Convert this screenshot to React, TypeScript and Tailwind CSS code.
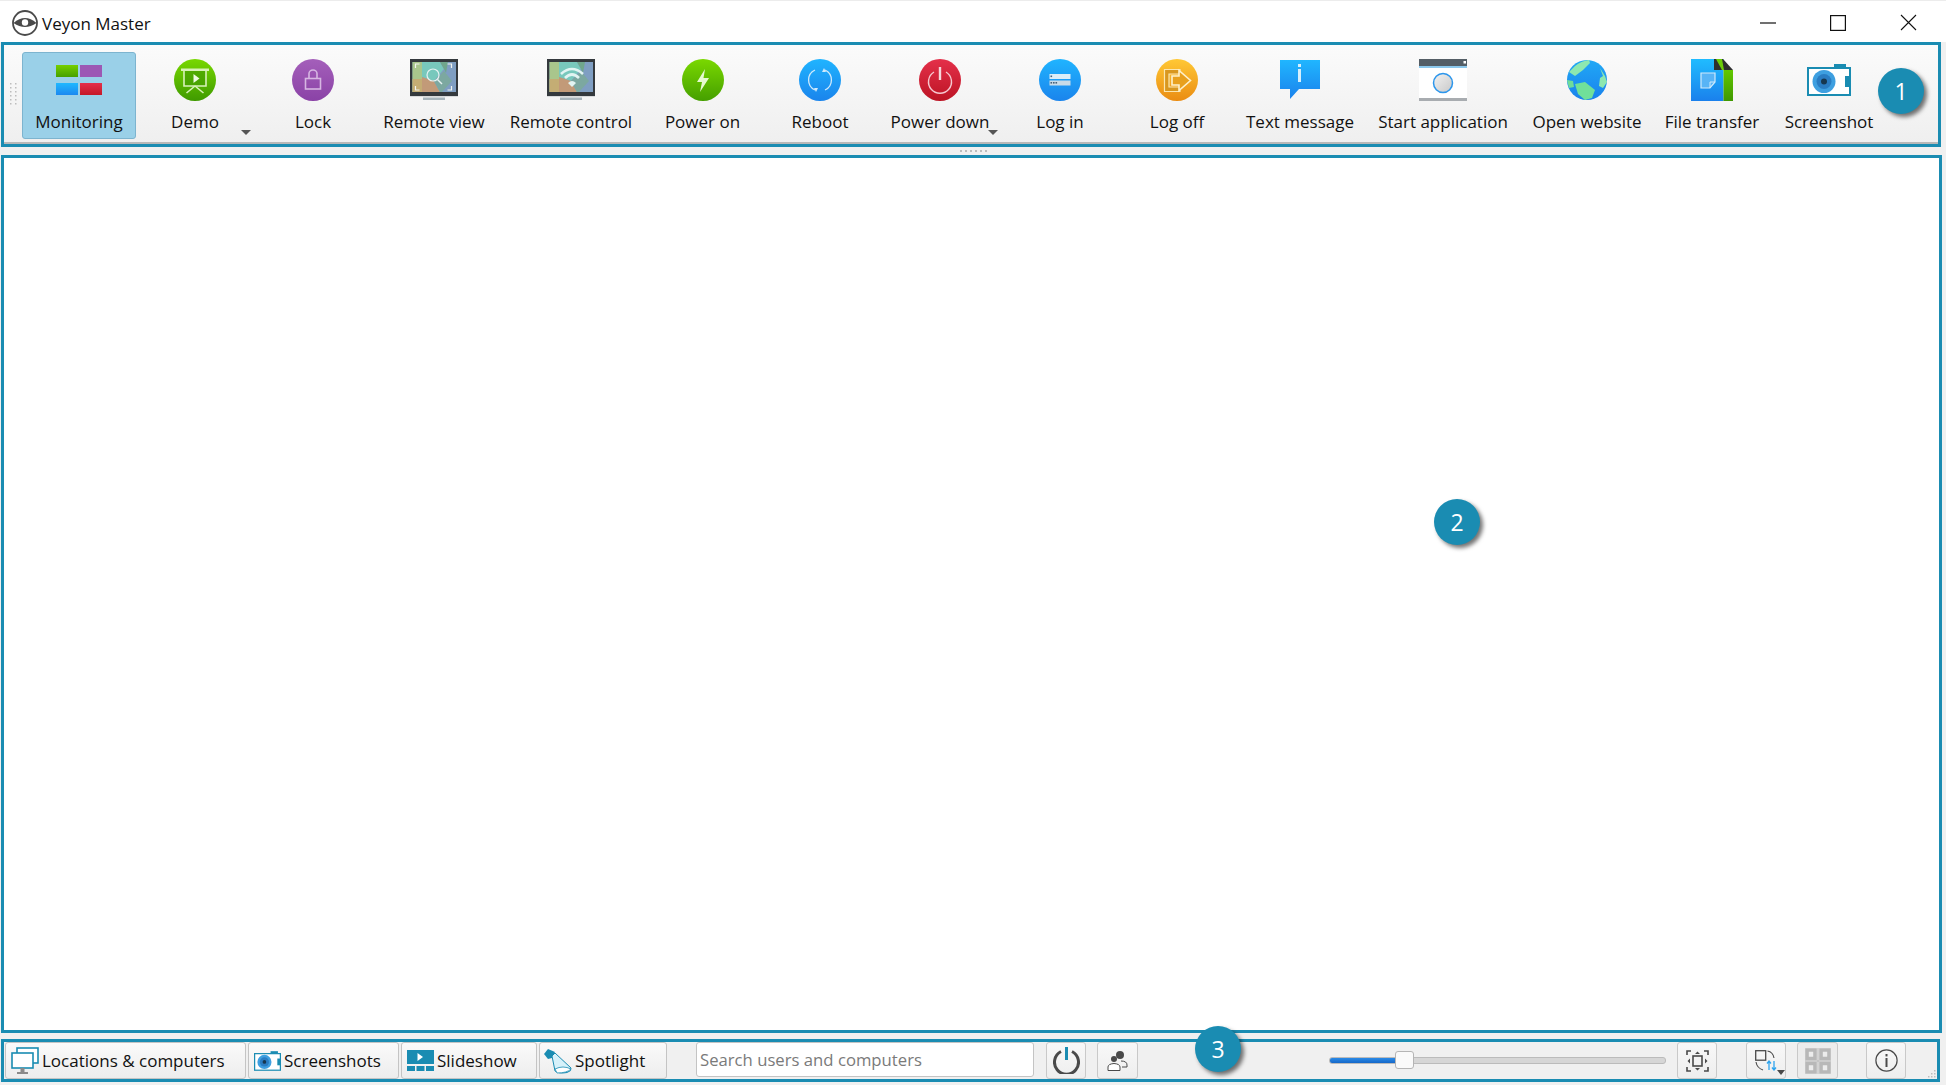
import type { ReactNode } from "react";

const TEAL = "#1a8cb2";

function Disc({ id, from, to, children }: { id: string; from: string; to: string; children?: ReactNode }) {
  return (
    <svg width="42" height="42" viewBox="0 0 42 42" fill="none">
      <defs>
        <linearGradient id={id} x1="0" y1="0" x2="0" y2="1">
          <stop offset="0" stopColor={from} />
          <stop offset="1" stopColor={to} />
        </linearGradient>
      </defs>
      <circle cx="21" cy="21" r="21" fill={`url(#${id})`} />
      {children}
    </svg>
  );
}

function MonitoringIcon() {
  return (
    <svg width="46" height="30" viewBox="0 0 46 30">
      <defs>
        <linearGradient id="mg" x1="0" y1="0" x2="0" y2="1">
          <stop offset="0" stopColor="#76cf00" />
          <stop offset="1" stopColor="#46a000" />
        </linearGradient>
        <linearGradient id="mb" x1="0" y1="0" x2="0" y2="1">
          <stop offset="0" stopColor="#1fb8ff" />
          <stop offset="1" stopColor="#1c88f0" />
        </linearGradient>
        <linearGradient id="mr" x1="0" y1="0" x2="0" y2="1">
          <stop offset="0" stopColor="#e4304a" />
          <stop offset="1" stopColor="#c41828" />
        </linearGradient>
      </defs>
      <rect x="0" y="0" width="22" height="12" fill="url(#mg)" />
      <rect x="24" y="0" width="22" height="12" fill="#9c58b4" />
      <rect x="0" y="18" width="22" height="12" fill="url(#mb)" />
      <rect x="24" y="18" width="22" height="12" fill="url(#mr)" />
    </svg>
  );
}

function Monitor({ children }: { children?: ReactNode }) {
  return (
    <svg width="48" height="42" viewBox="0 0 48 42" fill="none">
      <rect x="0" y="0" width="48" height="37" fill="#34393d" />
      <rect x="0" y="37" width="48" height="1" fill="#d8dadb" />
      <rect x="2.5" y="3" width="43.5" height="30" fill="#7fb0b8" />
      <polygon points="2.5,3 12,3 12,33 2.5,33" fill="#a9c68c" />
      <polygon points="2.5,20 12,20 12,33 2.5,33" fill="#c4ad74" />
      <polygon points="12,3 30,3 34,10 24,22 12,18" fill="#78c8bc" />
      <polygon points="12,18 24,22 30,33 12,33" fill="#c29a78" />
      <polygon points="30,3 46,3 46,33 30,33 24,22 34,10" fill="#7f9ec2" />
      <polygon points="30,3 38,3 36,14 34,10" fill="#70a68c" />
      <polygon points="24,22 34,12 42,22 32,33 30,33" fill="#7ca8a0" />
      <rect x="13" y="38.5" width="22" height="2.5" fill="#a8b5bc" />
      {children}
    </svg>
  );
}

function DemoIcon() {
  return (
    <Disc id="d1" from="#78d800" to="#3f9a00">
      <rect x="10" y="12" width="22" height="15" fill="#3f9a00" opacity="0.6" />
      <rect x="7" y="9.5" width="28" height="2.5" fill="#d8f2b8" />
      <path d="M10 12V27H32V12" stroke="#d8f2b8" strokeWidth="1.6" />
      <path d="M19.5 15L25.5 19.5L19.5 24Z" fill="#eefbe0" />
      <path d="M21 27L12.5 34M21 27L29.5 34" stroke="#d8f2b8" strokeWidth="1.6" />
    </Disc>
  );
}

function LockIcon() {
  return (
    <Disc id="d2" from="#a45fba" to="#8a42a6">
      <rect x="13.5" y="19.5" width="15" height="10.5" stroke="#d6b6e2" strokeWidth="1.6" />
      <path d="M17 19.5V14.5A4 3.5 0 0 1 25 14.5V19.5" stroke="#d6b6e2" strokeWidth="1.6" />
    </Disc>
  );
}

function RemoteViewIcon() {
  return (
    <Monitor>
      <path d="M8 9V5H12M40 5H44V9M8 27V31H12M40 31H44V27" stroke="#f2f4ee" strokeWidth="1.2" transform="translate(-2.5 0)" />
      <circle cx="23" cy="16" r="6" stroke="#e6f2f2" strokeWidth="1.2" />
      <path d="M27.5 20.5L32 25" stroke="#e6f2f2" strokeWidth="1.4" />
    </Monitor>
  );
}

function RemoteControlIcon() {
  return (
    <Monitor>
      <path d="M14 15Q25 5 36 15" stroke="#e2f4f2" strokeWidth="2.6" />
      <path d="M18 19Q25 12 32 19" stroke="#e2f4f2" strokeWidth="2.6" />
      <path d="M21 24Q25 20 29 24L25 28Z" fill="#e2f4f2" />
    </Monitor>
  );
}

function PowerOnIcon() {
  return (
    <Disc id="d3" from="#7ad800" to="#459f00">
      <path d="M23 10L15 23H20L18 33L27 19H21.5Z" fill="#e6f9d2" />
    </Disc>
  );
}

function RebootIcon() {
  return (
    <Disc id="d4" from="#20b4ff" to="#1a84ec">
      <path d="M26 11A11 11 0 0 1 26 31" stroke="#cfe9fb" strokeWidth="1.3" />
      <path d="M16 31A11 11 0 0 1 16 11" stroke="#cfe9fb" strokeWidth="1.3" />
      <path d="M25 9L27 13L23 13Z" fill="#cfe9fb" />
      <path d="M17 33L15 29L19 29Z" fill="#cfe9fb" />
    </Disc>
  );
}

function PowerDownIcon() {
  return (
    <Disc id="d5" from="#e4304a" to="#bc1424">
      <path d="M15 13A11.5 11.5 0 1 0 27 13" stroke="#f6c8d0" strokeWidth="1.4" />
      <rect x="19.8" y="8" width="2.4" height="13" fill="#f6d8dc" />
    </Disc>
  );
}

function LogInIcon() {
  return (
    <Disc id="d6" from="#20b4ff" to="#1a84ec">
      <rect x="10.5" y="15" width="21" height="5" fill="#dcedf8" />
      <rect x="10.5" y="21.5" width="21" height="5" fill="#c8dbe8" />
      <rect x="11.5" y="16.5" width="1.6" height="1.6" fill="#44607a" />
      <rect x="11.5" y="23" width="1.6" height="1.6" fill="#44607a" />
      <rect x="14" y="23" width="1.6" height="1.6" fill="#44607a" />
      <rect x="16.5" y="23" width="1.6" height="1.6" fill="#44607a" />
    </Disc>
  );
}

function LogOffIcon() {
  return (
    <Disc id="d7" from="#ffc835" to="#ea8c12">
      <path d="M8.5 10.5H24V15H13V28H24V32.5H8.5Z" fill="#d9971f" stroke="#fbe6b0" strokeWidth="1.2" />
      <path d="M16 17H23V11.5L34.5 21.5L23 31.5V26H16Z" fill="#e8a01e" stroke="#fdf0cc" strokeWidth="1.6" />
    </Disc>
  );
}

function TextMessageIcon() {
  return (
    <svg width="40" height="40" viewBox="0 0 40 40">
      <defs>
        <linearGradient id="tm" x1="0" y1="0" x2="0" y2="1">
          <stop offset="0" stopColor="#20b6ff" />
          <stop offset="1" stopColor="#1a82ec" />
        </linearGradient>
      </defs>
      <path d="M0 0H40V29H19L10 39V29H0Z" fill="url(#tm)" />
      <rect x="18" y="4" width="3" height="3" fill="#d6effc" />
      <rect x="18" y="9" width="3" height="13" fill="#d6effc" />
    </svg>
  );
}

function StartAppIcon() {
  return (
    <svg width="48" height="42" viewBox="0 0 48 42" fill="none">
      <defs>
        <linearGradient id="sa" x1="0" y1="0" x2="1" y2="1">
          <stop offset="0" stopColor="#f2f2f2" />
          <stop offset="1" stopColor="#c8c8c8" />
        </linearGradient>
      </defs>
      <rect x="0" y="0" width="48" height="42" fill="#ffffff" />
      <rect x="0" y="0" width="48" height="7" fill="#545e66" />
      <rect x="0" y="7" width="48" height="2" fill="#8cc8ec" />
      <rect x="44.5" y="2" width="2.5" height="2.5" fill="#ffffff" />
      <rect x="0" y="39" width="48" height="3" fill="#a8acb0" />
      <circle cx="24" cy="24" r="9.5" fill="url(#sa)" stroke="#2c96ec" strokeWidth="1.5" />
    </svg>
  );
}

function GlobeIcon() {
  return (
    <svg width="40" height="40" viewBox="0 0 40 40">
      <defs>
        <linearGradient id="gb" x1="0" y1="0" x2="0" y2="1">
          <stop offset="0" stopColor="#20a8f6" />
          <stop offset="1" stopColor="#1a82ec" />
        </linearGradient>
      </defs>
      <circle cx="20" cy="20" r="20" fill="url(#gb)" />
      <path d="M8 6Q14 1 22 0L23 3L16 10L8 16L2 12Z" fill="#8de8b0" />
      <path d="M33 8L38 16L40 22L36 28L32 26L33 18L36 16Z" fill="#8de8b0" />
      <path d="M0 20L6 21L7 27L2 28Z" fill="#6fdc9a" />
      <path d="M8 24L18 22L28 30L25 38L18 40L11 34Z" fill="#70e09a" />
    </svg>
  );
}

function FileTransferIcon() {
  return (
    <svg width="42" height="42" viewBox="0 0 42 42" fill="none">
      <defs>
        <linearGradient id="ft" x1="0" y1="0" x2="0" y2="1">
          <stop offset="0" stopColor="#20bcff" />
          <stop offset="1" stopColor="#1a80ec" />
        </linearGradient>
        <linearGradient id="fg" x1="0" y1="0" x2="0" y2="1">
          <stop offset="0" stopColor="#62c800" />
          <stop offset="1" stopColor="#3f9800" />
        </linearGradient>
      </defs>
      <rect x="0" y="0" width="32.5" height="42" fill="url(#ft)" />
      <rect x="32.5" y="11" width="9.5" height="31" fill="url(#fg)" />
      <path d="M23 0H32L42 11H23Z" fill="#2e2e2e" />
      <path d="M25 0H31L33 11H31Z" fill="#6ccc08" />
      <path d="M10 14H24V23L19 29H10Z" fill="#58b4f6" stroke="#cfeafc" strokeWidth="1.2" />
      <path d="M24 23H19V29" stroke="#cfeafc" strokeWidth="1" />
    </svg>
  );
}

function CameraIcon({ w, h }: { w: number; h: number }) {
  return (
    <svg width={w} height={h} viewBox="0 0 44 32" fill="none">
      <rect x="27" y="0" width="12" height="4" fill={TEAL} />
      <rect x="1" y="4" width="42" height="27" fill="#ffffff" stroke={TEAL} strokeWidth="2" />
      <rect x="38" y="12" width="5" height="11" fill={TEAL} />
      <circle cx="17" cy="17.5" r="11.5" fill="#3e9fe0" />
      <circle cx="17" cy="17.5" r="7.5" fill="#2a7cc2" />
      <circle cx="17" cy="17.5" r="3" fill="#17374f" />
    </svg>
  );
}

function ToolItem({
  label,
  width,
  active,
  arrow,
  children,
}: {
  label: string;
  width: string;
  active?: boolean;
  arrow?: string;
  children: ReactNode;
}) {
  return (
    <div
      className={`relative flex h-[87px] shrink-0 flex-col items-center rounded-[3px] border pt-[6px] ${width} ${
        active ? "border-[#7db4cf] bg-[#9ad0e8]" : "border-transparent"
      }`}
    >
      <div className="flex h-[42px] w-full items-center justify-center">{children}</div>
      <div className="mt-[10px] text-[17px] leading-[22px] whitespace-nowrap text-[#111]">{label}</div>
      {arrow ? (
        <svg className={`absolute top-[77px] ${arrow}`} width="10" height="5" viewBox="0 0 10 5">
          <path d="M0 0H10L5 5Z" fill="#555" />
        </svg>
      ) : null}
    </div>
  );
}

function BarButton({ width, children, dim }: { width: string; children: ReactNode; dim?: boolean }) {
  return (
    <div
      className={`flex shrink-0 items-center justify-center rounded-[3px] border border-[#c9c9c9] ${width} ${
        dim ? "bg-[#ececec]" : "bg-linear-to-b from-[#f8f8f8] to-[#eeeeee]"
      }`}
    >
      {children}
    </div>
  );
}

function Tab({ width, label, children }: { width: string; label: string; children: ReactNode }) {
  return (
    <div
      className={`flex shrink-0 items-center rounded-[3px] border border-[#c4c4c4] bg-linear-to-b from-[#fafafa] to-[#ededed] pl-[5px] ${width}`}
    >
      {children}
      <span className="ml-[3px] text-[17px] whitespace-nowrap text-[#111]">{label}</span>
    </div>
  );
}

function Badge({ n, pos }: { n: number; pos: string }) {
  return (
    <div
      className={`absolute flex h-[46px] w-[46px] items-center justify-center rounded-full bg-[#1a8cb2] text-[23px] text-white shadow-[3px_3px_4px_rgba(0,0,0,0.55)] ${pos}`}
    >
      {n}
    </div>
  );
}

function GripDots() {
  return (
    <svg width="7" height="24" viewBox="0 0 7 24">
      {[0, 4, 8, 12, 16, 20].map((y) => (
        <g key={y} fill="#bdbdbd">
          <rect x="0" y={y} width="1.5" height="1.5" />
          <rect x="5" y={y} width="1.5" height="1.5" />
        </g>
      ))}
    </svg>
  );
}

export default function App() {
  return (
    <div
      className="relative flex h-[1085px] w-[1946px] flex-col overflow-hidden bg-[#f0f0f0]"
      style={{ fontFamily: '"Open Sans", "Noto Sans", sans-serif' }}
    >
      {/* title bar */}
      <div className="flex h-[42px] shrink-0 items-center border-t border-[#ececec] bg-white pt-[2px] pl-[12px]">
        <svg width="26" height="26" viewBox="0 0 26 26" fill="none">
          <circle cx="13" cy="13" r="12" fill="#fff" stroke="#4a4a4a" strokeWidth="1.8" />
          <path d="M1.5 13Q13 3 24.5 13Q13 21 1.5 13Z" fill="#4a4a4a" />
          <circle cx="13" cy="12.5" r="3.2" fill="#fff" />
        </svg>
        <span className="ml-[4px] pt-[2px] text-[17px] text-[#111]">Veyon Master</span>
        <div className="ml-auto flex items-center">
          <svg className="mr-[54px]" width="16" height="16" viewBox="0 0 16 16">
            <path d="M0 8H16" stroke="#111" strokeWidth="1.2" />
          </svg>
          <svg className="mr-[54px]" width="16" height="16" viewBox="0 0 16 16" fill="none">
            <rect x="0.6" y="0.6" width="14.8" height="14.8" stroke="#111" strokeWidth="1.2" />
          </svg>
          <svg className="mr-[29px]" width="17" height="17" viewBox="0 0 17 17">
            <path d="M1 1L16 16M16 1L1 16" stroke="#111" strokeWidth="1.1" />
          </svg>
        </div>
      </div>

      {/* toolbar */}
      <div className="ml-[1px] mr-[5px] flex h-[105px] shrink-0 border-[3px] border-[#1a8cb2] bg-linear-to-b from-[#fbfbfb] to-[#efefef] shadow-[inset_0_-2px_0_#b8b8b8]">
        <div className="flex w-[18px] shrink-0 items-start pt-[38px] pl-[6px]">
          <GripDots />
        </div>
        <div className="flex pt-[7px]">
          <ToolItem label="Monitoring" width="w-[114px]" active>
            <MonitoringIcon />
          </ToolItem>
          <ToolItem label="Demo" width="w-[118px]" arrow="left-[104px]">
            <DemoIcon />
          </ToolItem>
          <ToolItem label="Lock" width="w-[118px]">
            <LockIcon />
          </ToolItem>
          <ToolItem label="Remote view" width="w-[124px]">
            <RemoteViewIcon />
          </ToolItem>
          <ToolItem label="Remote control" width="w-[150px]">
            <RemoteControlIcon />
          </ToolItem>
          <ToolItem label="Power on" width="w-[113px]">
            <PowerOnIcon />
          </ToolItem>
          <ToolItem label="Reboot" width="w-[122px]">
            <RebootIcon />
          </ToolItem>
          <ToolItem label="Power down" width="w-[118px]" arrow="left-[106px]">
            <PowerDownIcon />
          </ToolItem>
          <ToolItem label="Log in" width="w-[122px]">
            <LogInIcon />
          </ToolItem>
          <ToolItem label="Log off" width="w-[112px]">
            <LogOffIcon />
          </ToolItem>
          <ToolItem label="Text message" width="w-[134px]">
            <TextMessageIcon />
          </ToolItem>
          <ToolItem label="Start application" width="w-[152px]">
            <StartAppIcon />
          </ToolItem>
          <ToolItem label="Open website" width="w-[136px]">
            <GlobeIcon />
          </ToolItem>
          <ToolItem label="File transfer" width="w-[114px]">
            <FileTransferIcon />
          </ToolItem>
          <ToolItem label="Screenshot" width="w-[120px]">
            <CameraIcon w={44} h={32} />
          </ToolItem>
        </div>
      </div>

      {/* splitter */}
      <div className="flex h-[8px] shrink-0 items-center justify-center gap-[3px]">
        {[0, 1, 2, 3, 4, 5].map((i) => (
          <div key={i} className="h-[2px] w-[2px] bg-[#bdbdbd]" />
        ))}
      </div>

      {/* main area */}
      <div className="ml-[1px] mr-[4px] min-h-0 flex-1 border-[3px] border-[#1a8cb2] bg-white" />

      {/* status bar */}
      <div className="mt-[6px] mb-[3px] ml-[1px] mr-[6px] flex h-[43px] shrink-0 border-[3px] border-[#1a8cb2] bg-[#f0f0f0] pl-[1px]">
        <Tab width="w-[241px]" label="Locations & computers">
          <svg width="28" height="28" viewBox="0 0 28 28" fill="none">
            <rect x="6" y="1" width="21" height="15" fill="#fff" stroke={TEAL} strokeWidth="1.6" />
            <rect x="1" y="6" width="21" height="15" fill="#fff" stroke={TEAL} strokeWidth="1.6" />
            <rect x="9.5" y="21" width="4" height="4" fill="#8a8a8a" />
            <rect x="6" y="25" width="11" height="2" fill="#8a8a8a" />
          </svg>
        </Tab>
        <Tab width="ml-[2px] w-[151px]" label="Screenshots">
          <CameraIcon w={27} h={20} />
        </Tab>
        <Tab width="ml-[2px] w-[136px]" label="Slideshow">
          <svg width="27" height="21" viewBox="0 0 27 21">
            <rect x="0" y="0" width="27" height="14" fill={TEAL} />
            <path d="M10.5 3L16 7L10.5 11Z" fill="#fff" />
            <rect x="0" y="16" width="8" height="5" fill={TEAL} />
            <rect x="9.5" y="16" width="8" height="5" fill={TEAL} />
            <rect x="19" y="16" width="8" height="5" fill={TEAL} />
          </svg>
        </Tab>
        <Tab width="ml-[2px] w-[128px]" label="Spotlight">
          <svg width="29" height="26" viewBox="0 0 29 26" fill="none" className="-ml-[2px]">
            <path d="M1 6L5 1L12 4L9 10L5 11Z" fill={TEAL} />
            <path d="M9 8L12 5L28 20Q29 23 24 24.5Q16 26 12 23Z" fill="#d6f1fa" stroke={TEAL} strokeWidth="1" />
            <path d="M12 21Q20 17 28 21Q24 25 14 25Z" fill="#fff" stroke={TEAL} strokeWidth="0.8" />
          </svg>
        </Tab>

        <div className="ml-[29px] mb-[2px] flex w-[338px] shrink-0 items-center rounded-[3px] border border-[#c4c4c4] bg-white pl-[3px] text-[16.7px] text-[#7a7a7a]">
          Search users and computers
        </div>

        <div className="ml-[12px] flex">
          <BarButton width="w-[40px]">
            <svg width="27" height="27" viewBox="0 0 27 27" fill="none">
              <path d="M8 4.5A12 12 0 1 0 19 4.5" stroke="#4a4a4a" strokeWidth="3" />
              <rect x="12" y="0" width="3" height="13" fill={TEAL} />
            </svg>
          </BarButton>
          <BarButton width="ml-[11px] w-[41px]">
            <svg width="21" height="20" viewBox="0 0 21 20" fill="none">
              <circle cx="13" cy="4" r="4" fill="#4a4a4a" />
              <circle cx="7" cy="8" r="3" fill="#4a4a4a" />
              <path d="M1 19.5V16Q1 13 7 12.5Q13 13 13 16V19.5Z" fill="#fff" stroke="#4a4a4a" strokeWidth="1" />
              <path d="M14 10Q20 10 20 14V16H15" stroke="#4a4a4a" strokeWidth="1" />
            </svg>
          </BarButton>
        </div>

        {/* zoom slider */}
        <div className="relative ml-[191px] flex w-[337px] shrink-0 items-center">
          <div className="flex h-[7px] w-full overflow-hidden rounded-[3px] border border-[#bbb] bg-[#d6d6d6]">
            <div className="h-full w-[70px] bg-linear-to-b from-[#2a8ae8] to-[#1668c8]" />
          </div>
          <div className="absolute top-[9px] left-[66px] h-[18px] w-[19px] rounded-[3px] border border-[#b5b5b5] bg-[#fafafa]" />
        </div>

        <BarButton width="ml-[11px] w-[40px]">
          <svg width="23" height="22" viewBox="0 0 23 22" fill="none" stroke="#4a4a4a">
            <path d="M1 5V1H5M18 1H22V5M1 17V21H5M18 21H22V17" strokeWidth="1.6" />
            <rect x="7" y="6" width="9" height="10" strokeWidth="1.6" />
            <path d="M11.5 1.5L14 4H9ZM11.5 20.5L14 18H9ZM1.5 11L4 8.5V13.5ZM21.5 11L19 8.5V13.5Z" fill="#4a4a4a" stroke="none" />
          </svg>
        </BarButton>
        <BarButton width="relative ml-[29px] w-[40px]">
          <svg width="22" height="21" viewBox="0 0 22 21" fill="none">
            <rect x="0.7" y="0.7" width="10" height="9.5" stroke="#4a4a4a" strokeWidth="1.3" />
            <path d="M12.5 1Q18 2 19 8M1 12Q2 18 8 20" stroke="#4a4a4a" strokeWidth="1.1" />
            <path d="M14 20V11M12 13.5L14 11L16 13.5M19 11V20M17 17.5L19 20L21 17.5" stroke="#2ea4ee" strokeWidth="1.3" />
          </svg>
          <svg className="absolute top-[27px] left-[30px]" width="8" height="5" viewBox="0 0 8 5">
            <path d="M0 0H8L4 5Z" fill="#4a4a4a" />
          </svg>
        </BarButton>
        <BarButton width="ml-[11px] w-[41px]" dim>
          <svg width="26" height="26" viewBox="0 0 26 26" fill="none">
            <path d="M2 2H10V10.5H2ZM16 2H24V10.5H16ZM2 15.5H10V24H2ZM16 15.5H24V24H16Z" stroke="#b8b8b8" strokeWidth="3.6" />
            <path d="M0 13H26M13 0V26" stroke="#b8b8b8" strokeWidth="1" />
          </svg>
        </BarButton>
        <BarButton width="ml-[28px] w-[40px]">
          <svg width="23" height="23" viewBox="0 0 23 23" fill="none">
            <circle cx="11.5" cy="11.5" r="10.6" stroke="#4a4a4a" strokeWidth="1.2" />
            <rect x="10.5" y="5" width="2" height="2.4" fill="#4a4a4a" />
            <rect x="10.5" y="9" width="2" height="9" fill="#4a4a4a" />
          </svg>
        </BarButton>
        <div className="ml-auto self-end pr-[1px] pb-[1px]">
          <svg width="8" height="8" viewBox="0 0 8 8" fill="#bdbdbd">
            <rect x="6" y="0" width="1.5" height="1.5" />
            <rect x="3" y="3" width="1.5" height="1.5" />
            <rect x="6" y="3" width="1.5" height="1.5" />
            <rect x="0" y="6" width="1.5" height="1.5" />
            <rect x="3" y="6" width="1.5" height="1.5" />
            <rect x="6" y="6" width="1.5" height="1.5" />
          </svg>
        </div>
      </div>

      {/* numbered callouts drawn over the window */}
      <Badge n={1} pos="left-[1878px] top-[68px]" />
      <Badge n={2} pos="left-[1434px] top-[499px]" />
      <Badge n={3} pos="left-[1195px] top-[1026px]" />
    </div>
  );
}
